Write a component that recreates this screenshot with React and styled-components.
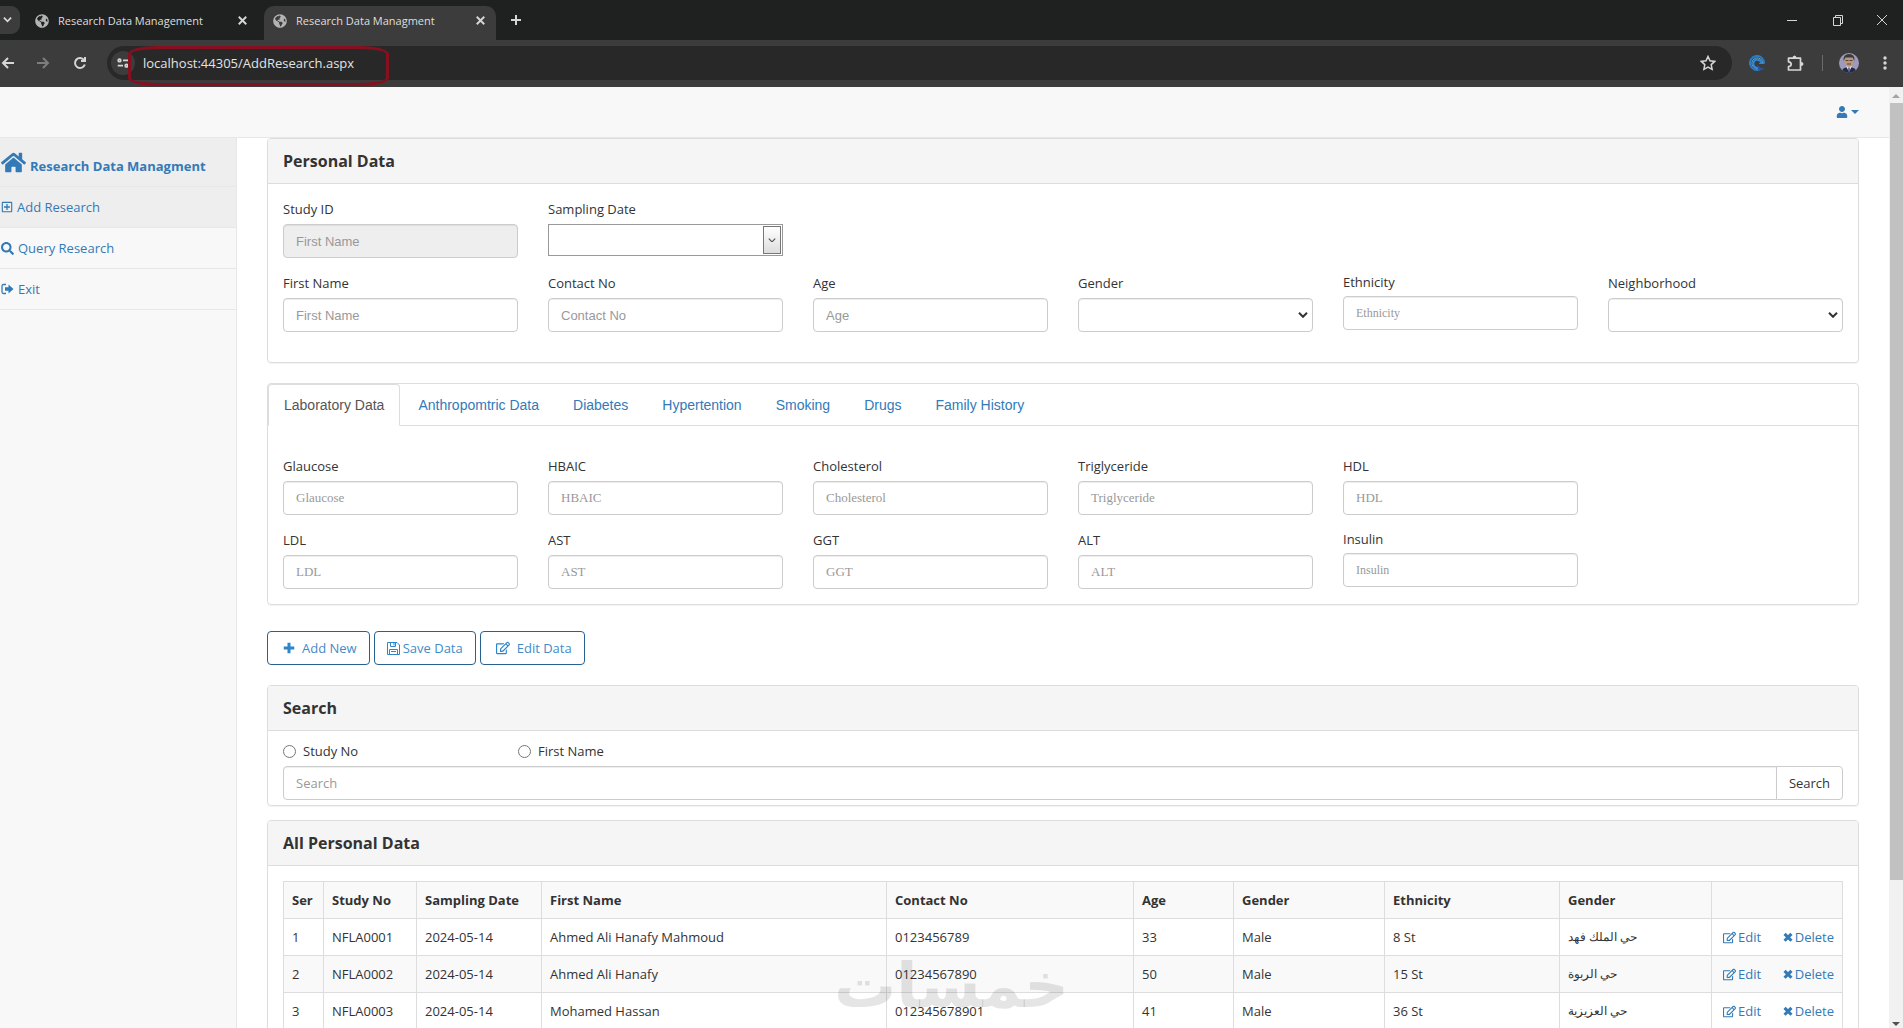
import React, { Component } from 'react';
import styled, { css, createGlobalStyle } from 'styled-components';
import {
  FaGlobeAmericas,
  FaHome,
  FaRegEdit,
  FaRegPlusSquare,
  FaSearch,
  FaUser,
} from 'react-icons/fa';

const sans = '"Open Sans", "Noto Sans", sans-serif';
const arial = '"Liberation Sans", Arial, sans-serif';
const serif = '"Liberation Serif", "Times New Roman", serif';

const GlobalStyle = createGlobalStyle`
  * {
    box-sizing: border-box;
  }

  body {
    margin: 0;
    background: #fff;
    color: #333;
    font-family: ${sans};
    font-size: 13px;
    line-height: 20px;
  }

  button, input, select {
    font: inherit;
    color: inherit;
  }

  a {
    color: #337ab7;
    text-decoration: none;
  }
`;

const Window = styled.div`
  position: relative;
  display: flex;
  flex-direction: column;
  height: 100vh;
  overflow: hidden;
`;

/* browser chrome */

const TabStrip = styled.div`
  display: flex;
  align-items: flex-end;
  height: 40px;
  flex: none;
  background: #1f2020;
  color: #dedede;
`;

const ChromeButton = styled.button`
  ${props => css`
    display: flex;
    align-items: center;
    justify-content: center;
    width: ${props.$width || 36}px;
    height: ${props.$height || 28}px;
    flex: none;
    padding: 0;
    border: 0;
    background: none;
    color: ${props.$dim ? '#7d7d7d' : '#d6d6d6'};
  `}
`;

const TabList = styled(ChromeButton)`
  justify-content: flex-end;
  width: 20px;
  margin-bottom: 6px;
  padding-right: 8px;
  border-radius: 0 9px 9px 0;
  background: #3c3c3c;
`;

const BrowserTab = styled.div`
  ${props => css`
    display: flex;
    align-items: center;
    width: ${props.$active ? 232 : 244}px;
    height: 34px;
    padding: 0 ${props.$active ? 6 : 14}px 5px ${props.$active ? 9 : 15}px;
    border-radius: 10px 10px 0 0;
    background: ${props.$active ? '#3c3c3c' : 'transparent'};
    font-size: 11px;

    span {
      flex: 1;
      margin-left: 9px;
      white-space: nowrap;
    }
  `}
`;

const WindowControls = styled.div`
  display: flex;
  align-self: flex-start;
  margin-left: auto;
`;

const Toolbar = styled.div`
  display: flex;
  align-items: center;
  height: 47px;
  flex: none;
  padding-bottom: 1px;
  background: #3c3c3c;
  color: #d6d6d6;
`;

const AddressBar = styled.div`
  position: relative;
  display: flex;
  align-items: center;
  flex: 1;
  height: 34px;
  margin: 0 6px 0 17px;
  padding: 0 6px 0 4px;
  border-radius: 17px;
  background: #282828;
`;

const SiteInfo = styled(ChromeButton)`
  width: 24px;
  height: 24px;
  border-radius: 12px;
  background: #3c3c3c;
`;

const Address = styled.input`
  flex: 1;
  min-width: 0;
  margin-left: 8px;
  padding: 0;
  border: 0;
  outline: 0;
  background: none;
  color: #e3e3e3;
  font-size: 13px;
`;

const AddressMark = styled.div`
  position: absolute;
  top: 0;
  left: 21px;
  width: 261px;
  height: 40px;
  border: 3px solid #86101f;
  border-radius: 30px / 8px;
  pointer-events: none;
`;

const Separator = styled.div`
  width: 1px;
  height: 16px;
  margin: 0 8px;
  background: #6b6b6b;
`;

/* page */

const Viewport = styled.div`
  display: flex;
  flex: 1;
  min-height: 0;
`;

const Page = styled.div`
  display: flex;
  flex-direction: column;
  flex: 1;
  min-width: 0;
  overflow: hidden;
`;

const ScrollTrack = styled.div`
  display: flex;
  flex-direction: column;
  align-items: center;
  width: 14px;
  padding: 7px 0 2px;
  background: #f1f1f1;
`;

const ScrollRoom = styled.div`
  flex: 1;
  align-self: stretch;
  margin: 5px 0 5px 1px;
`;

const ScrollThumb = styled.div`
  height: 85%;
  background: #c1c1c1;
`;

const Arrow = styled.div`
  ${props => css`
    border: 4px solid transparent;
    border-${props.$up ? 'bottom' : 'top'}: 4px solid ${props.$up ? '#a3a3a3' : '#505050'};
    border-${props.$up ? 'top' : 'bottom'}-width: 0;
  `}
`;

const Navbar = styled.header`
  display: flex;
  align-items: center;
  justify-content: flex-end;
  height: 51px;
  flex: none;
  padding-right: 30px;
  border-bottom: 1px solid #e7e7e7;
  background: #f8f8f8;
`;

const UserLink = styled.a`
  display: flex;
  align-items: center;
  gap: 3px;
`;

const Layout = styled.div`
  display: flex;
  align-items: stretch;
  flex: 1;
  min-height: 0;
`;

const SideBar = styled.nav`
  width: 237px;
  flex: none;
  border-right: 1px solid #e7e7e7;
  background: #f8f8f8;
`;

const SideLink = styled.a`
  ${props => css`
    display: flex;
    align-items: center;
    gap: 4px;
    height: ${props.$brand ? 49 : 41}px;
    padding-left: 1px;
    border-bottom: 1px solid #e7e7e7;
    background: ${props.$active ? '#eee' : 'transparent'};
    font-size: 13px;

    strong {
      padding-top: 8px;
    }
  `}
`;

const Content = styled.main`
  flex: 1;
  min-width: 0;
  padding: 0 30px;
`;

const Panel = styled.section`
  ${props => css`
    margin-bottom: ${props.$gap}px;
    border: 1px solid #ddd;
    border-radius: 4px;
    box-shadow: 0 1px 1px rgba(0, 0, 0, 0.05);
  `}
`;

const PanelTitle = styled.h2`
  margin: 0;
  padding: 10px 15px;
  border-bottom: 1px solid #ddd;
  border-radius: 3px 3px 0 0;
  background: #f5f5f5;
  font-size: 16px;
  font-weight: bold;
  line-height: 24px;
`;

const PanelBody = styled.div`
  ${props => css`
    padding: ${props.$padding};
  `}
`;

const FieldGrid = styled.div`
  display: grid;
  grid-template-columns: repeat(6, minmax(0, 1fr));
  gap: 15px 30px;
`;

const Field = styled.div`
  ${props => css`
    grid-column-start: ${props.$first ? 1 : 'auto'};

    label {
      display: block;
      margin-bottom: 5px;
      line-height: ${props.$compact ? 18 : 20}px;
    }
  `}
`;

const control = css`
  display: block;
  width: 100%;
  height: 34px;
  border: 1px solid #ccc;
  border-radius: 4px;
  background: #fff;
  box-shadow: inset 0 1px 1px rgba(0, 0, 0, 0.075);
`;

const TextInput = styled.input`
  ${props => css`
    ${control}
    padding: 6px 12px;
    font-family: ${props.$serif ? serif : arial};
    font-size: ${props.$compact ? 12 : 13}px;

    &:disabled {
      background: #eee;
    }

    &::placeholder {
      color: #999;
    }
  `}
`;

const SelectWrap = styled.div`
  position: relative;

  svg {
    position: absolute;
    top: 14px;
    right: 5px;
    pointer-events: none;
  }
`;

const Select = styled.select`
  ${control}
  padding: 6px 12px;
  appearance: none;
`;

const DateBox = styled.div`
  display: flex;
  height: 32px;
  padding: 1px;
  border: 1px solid #999;

  input {
    flex: 1;
    min-width: 0;
    padding: 0 8px;
    border: 0;
    background: none;
  }

  button {
    display: flex;
    align-items: center;
    justify-content: center;
    width: 18px;
    padding: 0;
    border: 1px solid #777;
    background: linear-gradient(#fff, #ddd);
  }
`;

const TabBar = styled.div`
  display: flex;
  gap: 2px;
  border-bottom: 1px solid #ddd;
`;

const TabButton = styled.button`
  ${props => css`
    margin-bottom: -1px;
    padding: 10px 15px;
    border: 1px solid ${props.$active ? '#ddd' : 'transparent'};
    border-bottom-color: ${props.$active ? '#fff' : 'transparent'};
    border-radius: 4px 4px 0 0;
    background: ${props.$active ? '#fff' : 'none'};
    color: ${props.$active ? '#555' : '#337ab7'};
    font-family: ${arial};
    font-size: 14px;
    line-height: 20px;
  `}
`;

const Actions = styled.div`
  display: flex;
  gap: 4px;
  margin: 26px 0 20px;
`;

const ActionButton = styled.button`
  ${props => css`
    display: flex;
    align-items: center;
    gap: ${props.$tight ? 3 : 7}px;
    height: 34px;
    padding: 0 12px;
    padding-left: ${props.$tight ? 12 : 15}px;
    border: 1px solid #286090;
    border-radius: 4px;
    background: #fff;
    color: #428bca;
    font-size: 13px;

    svg {
      color: #2d86c9;
    }
  `}
`;

const RadioRow = styled.div`
  display: grid;
  grid-template-columns: 235px 235px;
  margin-bottom: 5px;

  label {
    display: flex;
    align-items: center;
    gap: 7px;
  }

  input {
    width: 13px;
    height: 13px;
    margin: 0;
  }
`;

const SearchBox = styled.form`
  display: flex;

  input {
    flex: 1;
    border-radius: 4px 0 0 4px;
    font-family: ${sans};
  }
`;

const SearchButton = styled.button`
  width: 67px;
  height: 34px;
  margin-left: -1px;
  padding: 0;
  border: 1px solid #ccc;
  border-radius: 0 4px 4px 0;
  background: #fff;
`;

const Table = styled.table`
  width: 100%;
  table-layout: fixed;
  border-collapse: collapse;
  font-size: 13px;

  th, td {
    height: 37px;
    padding: 8px;
    border: 1px solid #ddd;
    text-align: left;
    white-space: nowrap;
  }

  th {
    font-weight: bold;
  }

  td:nth-child(9) {
    font-size: 12px;
  }

  tr:nth-child(odd) {
    background: #f9f9f9;
  }

  tbody tr:nth-child(odd) {
    background: #fff;
  }

  tbody tr:nth-child(even) {
    background: #f9f9f9;
  }
`;

const RowLinks = styled.div`
  display: flex;
  justify-content: space-between;
  padding-left: 3px;

  a {
    display: flex;
    align-items: center;
    gap: 2px;
  }
`;

const Watermark = styled.div`
  position: absolute;
  right: 0;
  bottom: 6px;
  left: 0;
  color: rgba(0, 0, 0, 0.1);
  font: bold 62px/72px "DejaVu Sans", sans-serif;
  text-align: center;
  pointer-events: none;
`;

const Chevron = ({ size = 10, width = 2, color = 'currentColor' }) => (
  <svg width={size} height={size * 0.6} viewBox="0 0 10 6" fill="none" stroke={color} strokeWidth={width}>
    <path d="M1 0.8 5 4.8 9 0.8" />
  </svg>
);

const Line = ({ d, size = 16, width = 2 }) => (
  <svg width={size} height={size} viewBox="0 0 16 16" fill="none" stroke="currentColor" strokeWidth={width}>
    <path d={d} />
  </svg>
);

const FloppyIcon = () => (
  <svg width="13" height="13" viewBox="0 0 13 13" fill="none" stroke="currentColor">
    <path d="M.5.5h9.500l2.500 2.500v9.500H.5zM3.500.5v4h5v-4M7 1v2.500M2.500 12.500v-5h8v5M4 9.500h5" />
  </svg>
);

const SignOutIcon = () => (
  <svg width="13" height="12" viewBox="0 0 13 12">
    <path d="M5 1.500H2.500Q1 1.500 1 3v6q0 1.500 1.500 1.500H5" fill="none" stroke="currentColor" strokeWidth="1.300" />
    <path d="M4 4.200h3.500V1.500L12.500 6l-5 4.500V7.800H4z" fill="currentColor" />
  </svg>
);

const SwirlIcon = () => (
  <svg width="16" height="16" viewBox="0 0 16 16" fill="none">
    <path d="M15 8A7 7 0 1 0 11 14.300" stroke="#2a7cc4" strokeWidth="2" />
    <path d="M13.500 8A5.300 5.300 0 1 0 10.500 13" stroke="#56aeea" />
    <path d="M12.300 8A4 4 0 1 0 10 12.300" stroke="#2f86cf" strokeWidth="2" />
    <path d="M8 9.500q2 3.300 7.500 4.300-2.500 2-6 1.700z" fill="#2455a8" />
    <path d="M10 8.500h5.500" stroke="#2f86cf" />
  </svg>
);

const PuzzleIcon = () => (
  <svg width="17" height="17" viewBox="0 0 17 17">
    <path
      d="M1.500 3.200H13.500V15H1.500V11.500Q4.200 11.300 4.200 9.200T1.500 6.800z"
      fill="none"
      stroke="currentColor"
      strokeWidth="1.700"
      strokeLinejoin="round"
    />
    <path d="M5.500 3q0-2.500 2-2.500t2 2.500zM14 7q2.500 0 2.500 2T14 11z" fill="currentColor" />
  </svg>
);

const Avatar = () => (
  <svg width="20" height="20" viewBox="0 0 20 20">
    <defs>
      <clipPath id="avatar">
        <circle cx="10" cy="10" r="10" />
      </clipPath>
    </defs>
    <g clipPath="url(#avatar)">
      <path d="M0 0h20v20H0z" fill="#9b9bbd" />
      <path d="M2 20q1-6 8-6t8 6z" fill="#252a3d" />
      <path d="M7 13h6l-3 6z" fill="#e4e6ec" />
      <ellipse cx="10" cy="8" rx="5" ry="6" fill="#b69883" />
      <path d="M4.500 8Q4 1 10 1t5.500 7L13.500 4.500h-7z" fill="#3c3937" />
      <path d="M6.500 7.500h3M10.500 7.500h3M8 11h4" stroke="#5b3f32" />
      <path d="M10 14.500v5" stroke="#3b4b8c" strokeWidth="1.500" />
    </g>
  </svg>
);

const CROSS = 'M4 4 12 12M12 4 4 12';
const BOLD_CROSS = 'M2.500 3 13.500 14M13.500 3 2.500 14';
const BOLD_PLUS = 'M8 1v14M1 8h14';

const personalFields = [
  { id: 'firstName', label: 'First Name' },
  { id: 'contactNo', label: 'Contact No' },
  { id: 'age', label: 'Age' },
  { id: 'gender', label: 'Gender', select: true },
  { id: 'ethnicity', label: 'Ethnicity', serif: true, compact: true },
  { id: 'neighborhood', label: 'Neighborhood', select: true },
];

const labFields = [
  { id: 'glaucose', label: 'Glaucose' },
  { id: 'hbaic', label: 'HBAIC' },
  { id: 'cholesterol', label: 'Cholesterol' },
  { id: 'triglyceride', label: 'Triglyceride' },
  { id: 'hdl', label: 'HDL' },
  { id: 'ldl', label: 'LDL', first: true },
  { id: 'ast', label: 'AST' },
  { id: 'ggt', label: 'GGT' },
  { id: 'alt', label: 'ALT' },
  { id: 'insulin', label: 'Insulin', compact: true },
];

const tabs = ['Laboratory Data', 'Anthropomtric Data', 'Diabetes', 'Hypertention', 'Smoking', 'Drugs', 'Family History'];

const columns = [
  { title: 'Ser', width: 40 },
  { title: 'Study No', width: 93 },
  { title: 'Sampling Date', width: 125 },
  { title: 'First Name' },
  { title: 'Contact No', width: 247 },
  { title: 'Age', width: 100 },
  { title: 'Gender', width: 151 },
  { title: 'Ethnicity', width: 175 },
  { title: 'Gender', width: 152 },
  { title: '', width: 131 },
];

const rows = [
  ['1', 'NFLA0001', '2024-05-14', 'Ahmed Ali Hanafy Mahmoud', '0123456789', '33', 'Male', '8 St', 'حي الملك فهد'],
  ['2', 'NFLA0002', '2024-05-14', 'Ahmed Ali Hanafy', '01234567890', '50', 'Male', '15 St', 'حي الربوة'],
  ['3', 'NFLA0003', '2024-05-14', 'Mohamed Hassan', '012345678901', '41', 'Male', '36 St', 'حي العزيزية'],
];

const Col = styled.col`
  ${props => css`
    width: ${props.$width ? `${props.$width}px` : 'auto'};
  `}
`;

class App extends Component {
  state = { tab: tabs[0] };

  renderField = field => (
    <Field key={field.id} $first={field.first} $compact={field.compact}>
      <label htmlFor={field.id}>{field.label}</label>
      {field.select ? (
        <SelectWrap>
          <Select id={field.id} />
          <Chevron color="#333" />
        </SelectWrap>
      ) : (
        <TextInput id={field.id} placeholder={field.label} $serif={field.serif} $compact={field.compact} />
      )}
    </Field>
  );

  renderBrowser = () => (
    <>
      <TabStrip>
        <TabList aria-label="Search tabs">
          <Chevron size={9} />
        </TabList>
        <BrowserTab>
          <FaGlobeAmericas size={14} color="#b4b4b4" />
          <span>Research Data Management</span>
          <ChromeButton $width={16} aria-label="Close tab"><Line d={CROSS} size={15} /></ChromeButton>
        </BrowserTab>
        <BrowserTab $active>
          <FaGlobeAmericas size={14} color="#b4b4b4" />
          <span>Research Data Managment</span>
          <ChromeButton $width={20} aria-label="Close tab"><Line d={CROSS} size={15} /></ChromeButton>
        </BrowserTab>
        <ChromeButton $width={40} $height={40} aria-label="New tab"><Line d="M8 3v10M3 8h10" width={2} /></ChromeButton>
        <WindowControls>
          <ChromeButton $width={46} $height={40} aria-label="Minimize"><Line d="M3 8.500h10" width={1} /></ChromeButton>
          <ChromeButton $width={46} $height={40} aria-label="Restore">
            <Line d="M3.500 5.500h7v8h-7zM5.500 5V3.500h7v8H11" width={1} />
          </ChromeButton>
          <ChromeButton $width={42} $height={40} aria-label="Close"><Line d="M3 3l10 10M13 3 3 13" width={1} /></ChromeButton>
        </WindowControls>
      </TabStrip>
      <Toolbar>
        <ChromeButton $width={16} aria-label="Back"><Line d="M14 8H3M8 3 3 8l5 5" /></ChromeButton>
        <ChromeButton $width={54} $dim aria-label="Forward"><Line d="M2 8h11M8 3l5 5-5 5" /></ChromeButton>
        <ChromeButton $width={20} aria-label="Reload"><Line d="M12.800 9.500A5 5 0 1 1 12 5M13 2v4H9" /></ChromeButton>
        <AddressBar>
          <SiteInfo aria-label="Site information">
            <Line d="M8 5h6M2 11h6M5.500 5a1.500 1.500 0 1 1-3 0a1.500 1.500 0 1 1 3 0M13.500 11a1.500 1.500 0 1 1-3 0a1.500 1.500 0 1 1 3 0" size={14} />
          </SiteInfo>
          <Address aria-label="Address" defaultValue="localhost:44305/AddResearch.aspx" />
          <ChromeButton aria-label="Bookmark">
            <Line d="M8 1.500l2 4.300 4.700.6-3.500 3.200.9 4.700L8 12l-4.100 2.300.9-4.700L1.300 6.400 6 5.800z" width={1.500} />
          </ChromeButton>
          <AddressMark />
        </AddressBar>
        <ChromeButton $width={38} aria-label="Extension"><SwirlIcon /></ChromeButton>
        <ChromeButton $width={38} aria-label="Extensions"><PuzzleIcon /></ChromeButton>
        <Separator />
        <ChromeButton aria-label="Profile"><Avatar /></ChromeButton>
        <ChromeButton aria-label="Menu">
          <svg width="4" height="16" viewBox="0 0 4 16" fill="currentColor">
            <circle cx="2" cy="3" r="1.700" />
            <circle cx="2" cy="8" r="1.700" />
            <circle cx="2" cy="13" r="1.700" />
          </svg>
        </ChromeButton>
      </Toolbar>
    </>
  );

  renderSideBar = () => (
    <SideBar>
      <SideLink href="#home" $brand $active><FaHome size={25} /><strong>Research Data Managment</strong></SideLink>
      <SideLink href="#add" $active><FaRegPlusSquare size={12} />Add Research</SideLink>
      <SideLink href="#query"><FaSearch size={13} />Query Research</SideLink>
      <SideLink href="#exit"><SignOutIcon />Exit</SideLink>
    </SideBar>
  );

  renderPersonal = () => (
    <Panel $gap={20}>
      <PanelTitle>Personal Data</PanelTitle>
      <PanelBody $padding="15px 15px 30px">
        <FieldGrid>
          <Field>
            <label htmlFor="studyId">Study ID</label>
            <TextInput id="studyId" placeholder="First Name" disabled />
          </Field>
          <Field>
            <label htmlFor="samplingDate">Sampling Date</label>
            <DateBox>
              <input id="samplingDate" />
              <button type="button" aria-label="Pick a date"><Chevron size={8} width={1.5} color="#555" /></button>
            </DateBox>
          </Field>
          {personalFields.map((field, i) => this.renderField({ ...field, first: i === 0 }))}
        </FieldGrid>
      </PanelBody>
    </Panel>
  );

  renderTabs = () => (
    <Panel $gap={0}>
      <TabBar role="tablist">
        {tabs.map(tab => (
          <TabButton
            key={tab}
            role="tab"
            aria-selected={tab === this.state.tab}
            $active={tab === this.state.tab}
            onClick={() => this.setState({ tab })}
          >
            {tab}
          </TabButton>
        ))}
      </TabBar>
      <PanelBody $padding="30px 15px 15px">
        <FieldGrid>{labFields.map(field => this.renderField({ ...field, serif: true }))}</FieldGrid>
      </PanelBody>
    </Panel>
  );

  renderSearch = () => (
    <Panel $gap={14}>
      <PanelTitle>Search</PanelTitle>
      <PanelBody $padding="10px 15px 5px">
        <RadioRow>
          <label><input type="radio" name="searchBy" />Study No</label>
          <label><input type="radio" name="searchBy" />First Name</label>
        </RadioRow>
        <SearchBox>
          <TextInput aria-label="Search" placeholder="Search" />
          <SearchButton type="button">Search</SearchButton>
        </SearchBox>
      </PanelBody>
    </Panel>
  );

  renderTable = () => (
    <Panel $gap={20}>
      <PanelTitle>All Personal Data</PanelTitle>
      <PanelBody $padding="15px">
        <Table>
          <colgroup>
            {columns.map((column, i) => <Col key={i} $width={column.width} />)}
          </colgroup>
          <thead>
            <tr>{columns.map((column, i) => <th key={i}>{column.title}</th>)}</tr>
          </thead>
          <tbody>
            {rows.map(row => (
              <tr key={row[0]}>
                {row.map((cell, i) => <td key={i}>{cell}</td>)}
                <td>
                  <RowLinks>
                    <a href="#edit"><FaRegEdit size={13} />Edit</a>
                    <a href="#delete"><Line d={BOLD_CROSS} size={10} width={5} />Delete</a>
                  </RowLinks>
                </td>
              </tr>
            ))}
          </tbody>
        </Table>
      </PanelBody>
    </Panel>
  );

  render() {
    return (
      <Window>
        <GlobalStyle />
        {this.renderBrowser()}
        <Viewport>
          <Page>
            <Navbar>
              <UserLink href="#user" aria-label="Account">
                <FaUser size={12} />
                <svg width="8" height="4" viewBox="0 0 8 4" fill="currentColor"><path d="M0 0h8L4 4z" /></svg>
              </UserLink>
            </Navbar>
            <Layout>
              {this.renderSideBar()}
              <Content>
                {this.renderPersonal()}
                {this.renderTabs()}
                <Actions>
                  <ActionButton><Line d={BOLD_PLUS} size={12} width={4} />Add New</ActionButton>
                  <ActionButton $tight><FloppyIcon />Save Data</ActionButton>
                  <ActionButton><FaRegEdit size={14} />Edit Data</ActionButton>
                </Actions>
                {this.renderSearch()}
                {this.renderTable()}
              </Content>
            </Layout>
          </Page>
          <ScrollTrack>
            <Arrow $up />
            <ScrollRoom><ScrollThumb /></ScrollRoom>
            <Arrow />
          </ScrollTrack>
        </Viewport>
        <Watermark>خمسات</Watermark>
      </Window>
    );
  }
}

export default App;
